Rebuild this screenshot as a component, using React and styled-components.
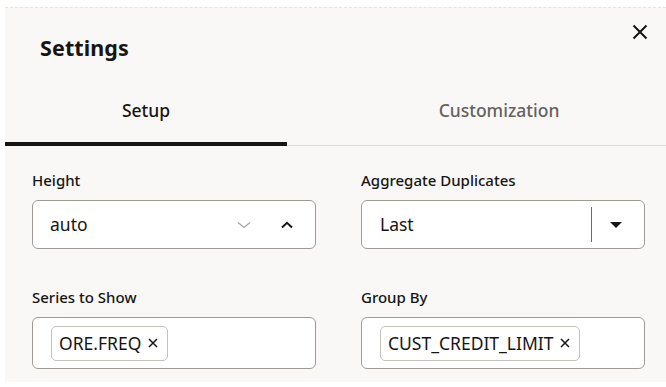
import React from "react";
import styled, { createGlobalStyle } from "styled-components";

const Global = createGlobalStyle`
  html, body { margin: 0; padding: 0; background: #ffffff; }
  body { font-family: "Noto Sans", "Open Sans", sans-serif; color: #161513; }
  * { box-sizing: border-box; }
`;

const Panel = styled.div`
  margin: 7px 0 0 5px;
  width: 661px;
  height: 375px;
  background: #f9f8f6;
  border-top: 1px dashed #e6e4e1;
  overflow: hidden;
`;

const Header = styled.div`
  height: 69px;
  display: flex;
  justify-content: space-between;
  align-items: flex-start;
  padding: 0 18px 0 35px;
`;

const Title = styled.h1`
  margin: 26px 0 0 0;
  font-size: 21.5px;
  line-height: 28px;
  font-weight: 700;
  letter-spacing: 0.1px;
`;

const CloseBtn = styled.button`
  margin-top: 16px;
  width: 16px;
  height: 16px;
  padding: 0;
  border: 0;
  background: transparent;
  display: flex;
  align-items: center;
  justify-content: center;
  color: #161513;
`;

const TabBar = styled.div`
  display: flex;
  box-shadow: inset 0 -1px 0 #dcdad7;
`;

const Tab = styled.div`
  flex: 0 0 ${(p) => p.$w}px;
  text-align: center;
  padding: 21px 0 20px;
  font-size: 17.5px;
  line-height: 24px;
  font-weight: 500;
  color: ${(p) => (p.$active ? "#161513" : "#65625f")};
  border-bottom: 4px solid ${(p) => (p.$active ? "#161513" : "transparent")};
  border-radius: 0 2px 0 0;
`;

const Content = styled.div`
  display: grid;
  grid-template-columns: 284px 284px;
  column-gap: 45px;
  row-gap: 38px;
  padding: 24px 0 0 27px;
`;

const Field = styled.div`
  display: flex;
  flex-direction: column;
  gap: 10px;
`;

const Label = styled.label`
  font-size: 15px;
  line-height: 20px;
  font-weight: 500;
  color: #161513;
`;

const Input = styled.div`
  height: ${(p) => p.$h}px;
  background: #ffffff;
  border: 1px solid #9e9b97;
  border-radius: 6px;
  display: flex;
  align-items: center;
  padding: 0 ${(p) => p.$pr ?? 0}px 0 ${(p) => p.$pl}px;
`;

const Value = styled.span`
  flex: 1;
  font-size: 17.5px;
  line-height: 24px;
  margin-top: -2px;
  color: #161513;
`;

const IconSlot = styled.span`
  display: flex;
  align-items: center;
  justify-content: center;
  width: ${(p) => p.$w}px;
  margin-right: ${(p) => p.$mr ?? 0}px;
`;

const Divider = styled.span`
  align-self: stretch;
  margin: 6px 0;
  width: 1px;
  background: #6b6966;
`;

const Chip = styled.span`
  display: inline-flex;
  align-items: center;
  gap: 7px;
  height: 35px;
  padding: 0 9px 0 7px;
  border: 1px solid #c4c1bd;
  border-radius: 5px;
  background: #ffffff;
  font-size: 17.5px;
  line-height: 24px;
  color: #161513;
`;

const Close = () => (
  <svg width="16" height="16" viewBox="0 0 16 16">
    <path d="M1.5 1.5 L14.5 14.5 M14.5 1.5 L1.5 14.5" stroke="#161513" strokeWidth="2" fill="none" />
  </svg>
);

const ChevronDown = () => (
  <svg width="14" height="8" viewBox="0 0 14 8">
    <path d="M1 1.5 L7 6.5 L13 1.5" stroke="#a9a6a2" strokeWidth="1.3" fill="none" />
  </svg>
);

const ChevronUp = () => (
  <svg width="12" height="8" viewBox="0 0 12 8">
    <path d="M1 6.5 L6 1.8 L11 6.5" stroke="#161513" strokeWidth="2" fill="none" />
  </svg>
);

const Caret = () => (
  <svg width="12" height="6" viewBox="0 0 12 6">
    <path d="M0 0 L12 0 L6 6 Z" fill="#161513" />
  </svg>
);

const SmallX = () => (
  <svg width="10" height="10" viewBox="0 0 10 10">
    <path d="M1 1 L9 9 M9 1 L1 9" stroke="#161513" strokeWidth="1.5" fill="none" />
  </svg>
);

export default function App() {
  return (
    <>
      <Global />
      <Panel>
        <Header>
          <Title>Settings</Title>
          <CloseBtn aria-label="Close">
            <Close />
          </CloseBtn>
        </Header>
        <TabBar>
          <Tab $w={282} $active>Setup</Tab>
          <Tab $w={424}>Customization</Tab>
        </TabBar>
        <Content>
          <Field>
            <Label>Height</Label>
            <Input $h={49} $pl={17} $pr={17}>
              <Value>auto</Value>
              <IconSlot $w={20} $mr={22}><ChevronDown /></IconSlot>
              <IconSlot $w={22}><ChevronUp /></IconSlot>
            </Input>
          </Field>
          <Field>
            <Label>Aggregate Duplicates</Label>
            <Input $h={49} $pl={18} $pr={5}>
              <Value>Last</Value>
              <Divider />
              <IconSlot $w={47}><Caret /></IconSlot>
            </Input>
          </Field>
          <Field>
            <Label>Series to Show</Label>
            <Input $h={52} $pl={18}>
              <Chip>
                ORE.FREQ
                <SmallX />
              </Chip>
            </Input>
          </Field>
          <Field>
            <Label>Group By</Label>
            <Input $h={52} $pl={18}>
              <Chip>
                CUST_CREDIT_LIMIT
                <SmallX />
              </Chip>
            </Input>
          </Field>
        </Content>
      </Panel>
    </>
  );
}
